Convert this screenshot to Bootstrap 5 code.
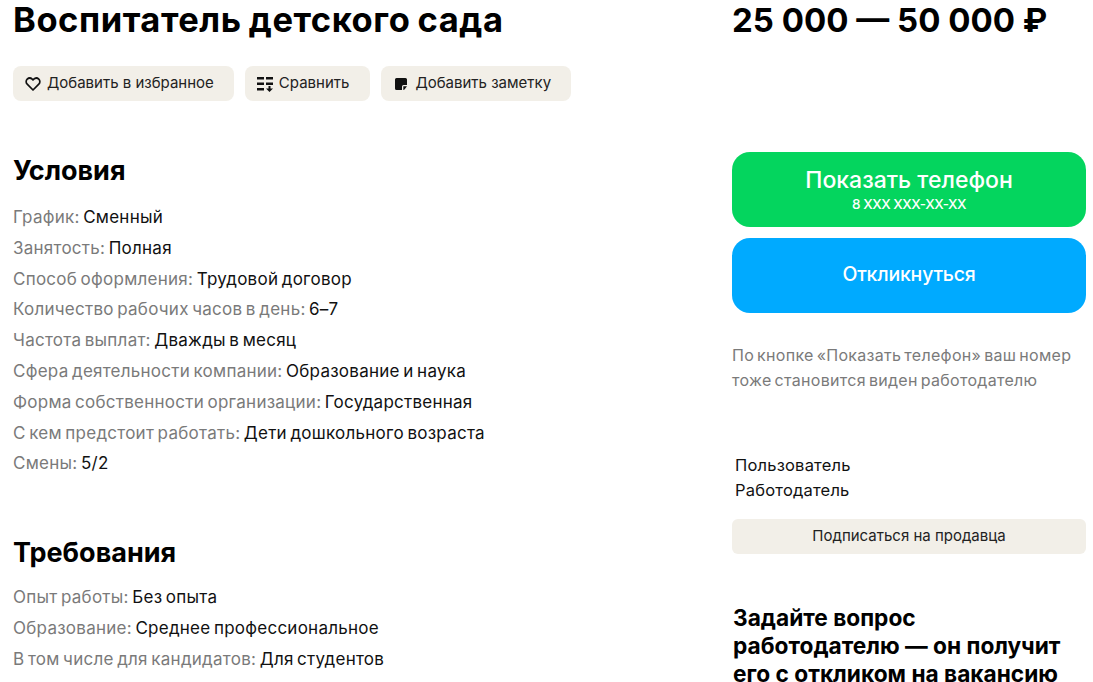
<!DOCTYPE html>
<html lang="ru">
<head>
  <meta charset="UTF-8" />
  <meta name="viewport" content="width=device-width, initial-scale=1.0"/>
  <title>Воспитатель детского сада</title>
  <link href="https://cdn.jsdelivr.net/npm/bootstrap@5.3.0/dist/css/bootstrap.min.css" rel="stylesheet">
  <style>
    html, body { height: 682px; overflow: hidden; }
    body { font-family: Inter, "Noto Sans", sans-serif; color: #111; background: #fff; }
    .page-wrap { padding: 0 7px 0 13px; }
    .col-main { width: 719px; flex: none; }
    .col-side { width: 354px; flex: none; }
    .vac-title { font-size: 34.5px; font-weight: 700; line-height: 40px; margin: 0 0 26px; letter-spacing: .55px; word-spacing: -1.5px; color: #000; }
    .vac-price { font-size: 33px; font-weight: 700; line-height: 40px; margin: 0 0 112px; color: #000; }
    .tool-row { gap: 11px; }
    .tool-btn { background: #f2efe8; border: 0; border-radius: 8px; height: 35px; padding: 0 20px 0 12px; font-size: 15px; color: #222; gap: 6px; }
    .tool-btn.cmp { padding-right: 21px; }
    .tool-btn.note { padding-left: 14px; gap: 8px; }
    .sect-title { font-size: 27px; font-weight: 700; line-height: 32px; margin: 0 0 15px; color: #000; }
    .cond-list { margin: 0; padding: 0; list-style: none; font-size: 17px; line-height: 30.8px; letter-spacing: .25px; word-spacing: -1.5px; }
    .cond-list span { color: #7a7a7a; }
    .cond-block { margin-top: 54px; }
    .cond-block + .cond-block { margin-top: 58px; }
    .cond-block + .cond-block .sect-title { margin-bottom: 13px; }
    .cta { border: 0; border-radius: 18px; width: 100%; height: 75px; color: #fff; font-weight: 500; font-size: 19.5px; line-height: 1.2; letter-spacing: -.2px; padding-bottom: 2px; }
    .cta-green { background: #04d55e; font-size: 23px; letter-spacing: 0; margin-bottom: 11px; padding-bottom: 1px; }
    .cta-green small { display: block; margin-top: 2px; font-size: 13.5px; line-height: 16px; letter-spacing: -.45px; }
    .cta-blue { background: #00aaff; }
    .cta-note { color: #7a7a7a; font-size: 16px; line-height: 25px; letter-spacing: .3px; word-spacing: -1.8px; margin: 30px 0 60px; }
    .owner { font-size: 16.500px; line-height: 25px; letter-spacing: .2px; padding-left: 3px; margin-bottom: 16px; }
    .sub-btn { background: #f2efe8; border: 0; border-radius: 6px; width: 100%; height: 35px; font-size: 15px; color: #222; padding-bottom: 2px; }
    .ask-title { font-size: 22.7px; font-weight: 700; line-height: 28px; margin: 50px 0 0 1px; color: #000; }
  </style>
</head>
<body>
  <div class="d-flex page-wrap">
    <div class="col-main">
      <h1 class="vac-title">Воспитатель детского сада</h1>
      <div class="d-flex tool-row">
        <button class="tool-btn d-flex align-items-center">
          <svg width="16" height="16" viewBox="0 0 16 16"><path d="M8 14 2.200 8.200a3.500 3.500 0 0 1 0-5 3.600 3.600 0 0 1 5 0l.8.8.8-.8a3.600 3.600 0 0 1 5 0 3.500 3.500 0 0 1 0 5Z" fill="none" stroke="#111" stroke-width="1.7" stroke-linejoin="round"/></svg>
          Добавить в избранное
        </button>
        <button class="tool-btn cmp d-flex align-items-center">
          <svg width="16" height="16" viewBox="0 0 16 16" fill="#111"><path d="M0 1h7v2.400H0zM9 1h7v2.400H9zM0 6.500h7v2.400H0zM9 6.500h7v2.400H9zM0 12h7v2.400H0zM11.500 10h2v2.600H16l-3.500 3.400L9 12.600h2.500z"/></svg>
          Сравнить
        </button>
        <button class="tool-btn note d-flex align-items-center">
          <svg width="12" height="12" viewBox="0 0 12 12"><path d="M1.500 0h9A1.500 1.500 0 0 1 12 1.500V7H8.500A1.500 1.500 0 0 0 7 8.500V12H1.500A1.500 1.500 0 0 1 0 10.500v-9A1.500 1.500 0 0 1 1.500 0ZM8.300 12V8.300H12L9.500 11.500a1.500 1.500 0 0 1-1.200.5Z" fill="#111"/></svg>
          Добавить заметку
        </button>
      </div>

      <div class="cond-block">
        <h2 class="sect-title">Условия</h2>
        <ul class="cond-list">
          <li><span>График:</span> Сменный</li>
          <li><span>Занятость:</span> Полная</li>
          <li><span>Способ оформления:</span> Трудовой договор</li>
          <li><span>Количество рабочих часов в день:</span> 6–7</li>
          <li><span>Частота выплат:</span> Дважды в месяц</li>
          <li><span>Сфера деятельности компании:</span> Образование и наука</li>
          <li><span>Форма собственности организации:</span> Государственная</li>
          <li><span>С кем предстоит работать:</span> Дети дошкольного возраста</li>
          <li><span>Смены:</span> 5/2</li>
        </ul>
      </div>

      <div class="cond-block">
        <h2 class="sect-title">Требования</h2>
        <ul class="cond-list">
          <li><span>Опыт работы:</span> Без опыта</li>
          <li><span>Образование:</span> Среднее профессиональное</li>
          <li><span>В том числе для кандидатов:</span> Для студентов</li>
        </ul>
      </div>
    </div>

    <div class="col-side">
      <div class="vac-price">25 000 — 50 000 ₽</div>
      <button class="cta cta-green">Показать телефон<small>8 XXX XXX-XX-XX</small></button>
      <button class="cta cta-blue">Откликнуться</button>
      <p class="cta-note">По кнопке «Показать телефон» ваш номер<br>тоже становится виден работодателю</p>
      <div class="owner">Пользователь<br>Работодатель</div>
      <button class="sub-btn">Подписаться на продавца</button>
      <div class="ask-title">Задайте вопрос<br>работодателю — он получит<br>его с откликом на вакансию</div>
    </div>
  </div>
</body>
</html>
